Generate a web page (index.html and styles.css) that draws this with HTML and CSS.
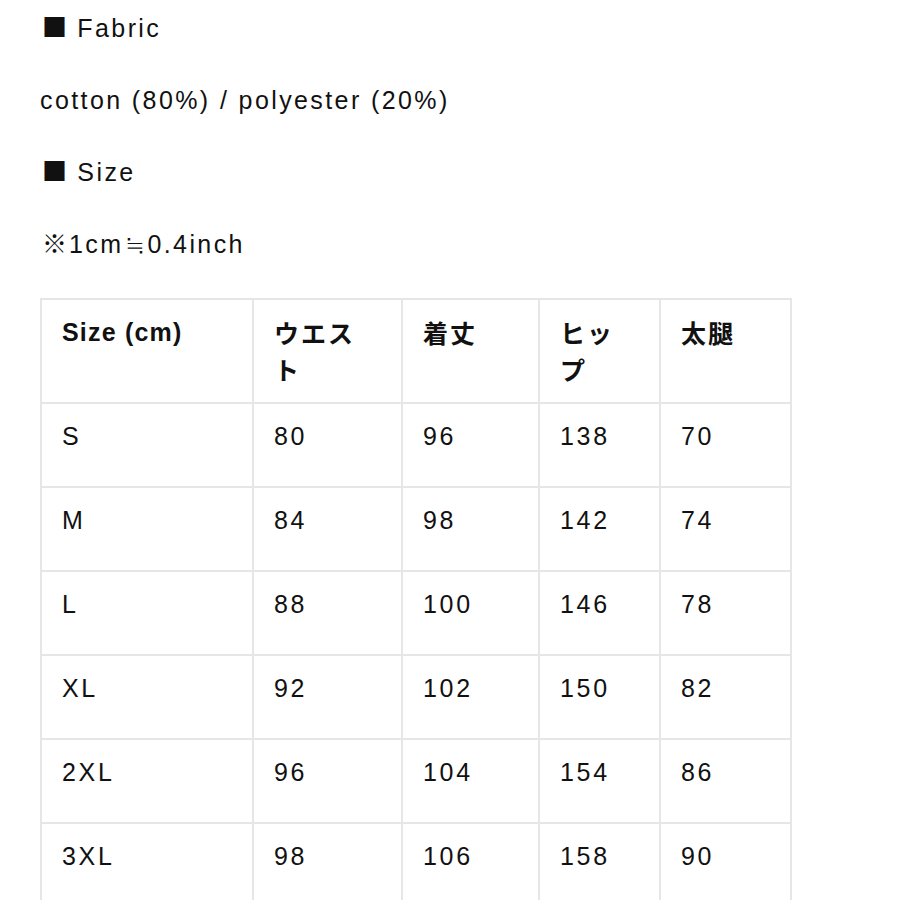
FILE: index.html
```html
<!DOCTYPE html>
<html lang="ja">
<head>
<meta charset="utf-8">
<link rel="stylesheet" href="styles.css">
</head>
<body>
<div class="page">
  <p class="line"><span class="cjk sq">■</span> Fabric</p>
  <p class="line">cotton (80%) / polyester (20%)</p>
  <p class="line"><span class="cjk sq">■</span> Size</p>
  <p class="line"><span class="cjk mark">※</span>1cm<span class="cjk mark">≒</span>0.4inch</p>
  <table class="size-table">
    <colgroup>
      <col class="c1"><col class="c2"><col class="c3"><col class="c4"><col class="c5">
    </colgroup>
    <thead>
      <tr><th>Size (cm)</th><th class="ja">ウエスト</th><th class="ja">着丈</th><th class="ja">ヒップ</th><th class="ja">太腿</th></tr>
    </thead>
    <tbody>
      <tr><td>S</td><td>80</td><td>96</td><td>138</td><td>70</td></tr>
      <tr><td>M</td><td>84</td><td>98</td><td>142</td><td>74</td></tr>
      <tr><td>L</td><td>88</td><td>100</td><td>146</td><td>78</td></tr>
      <tr><td>XL</td><td>92</td><td>102</td><td>150</td><td>82</td></tr>
      <tr><td>2XL</td><td>96</td><td>104</td><td>154</td><td>86</td></tr>
      <tr><td>3XL</td><td>98</td><td>106</td><td>158</td><td>90</td></tr>
    </tbody>
  </table>
</div>
</body>
</html>
```
FILE: styles.css
```css
html, body {
  margin: 0;
  padding: 0;
  background: #ffffff;
}
body {
  font-family: "Liberation Sans", "Noto Sans CJK JP", sans-serif;
  color: #111111;
}
.page {
  padding: 10px 0 0 40px;
}
.line {
  margin: 0 0 36px 0;
  font-size: 25px;
  line-height: 36px;
  letter-spacing: 2.4px;
}
.cjk {
  font-family: "Noto Sans CJK JP", sans-serif;
  letter-spacing: 0;
  line-height: 0;
}
.mark {
  margin-left: 2px;
  margin-right: 2px;
}
.sq {
  margin-left: 2px;
  margin-right: 1px;
}
.size-table {
  border-collapse: collapse;
  margin-top: 15px;
  font-size: 25px;
  line-height: 37px;
  table-layout: fixed;
  width: 750px;
}
.c1 { width: 212px; }
.c2 { width: 149px; }
.c3 { width: 137px; }
.c4 { width: 121px; }
.c5 { width: 131px; }
.size-table th,
.size-table td {
  border: 2px solid #e6e6e6;
  text-align: left;
  vertical-align: top;
  letter-spacing: 2.7px;
}
.size-table th {
  font-weight: bold;
  padding: 14px 20px 14px 20px;
  letter-spacing: 1.2px;
}
.size-table th.ja {
  font-family: "Noto Sans CJK JP", sans-serif;
  letter-spacing: 2px;
}
.size-table td {
  padding: 14px 20px 31px 20px;
}
```
